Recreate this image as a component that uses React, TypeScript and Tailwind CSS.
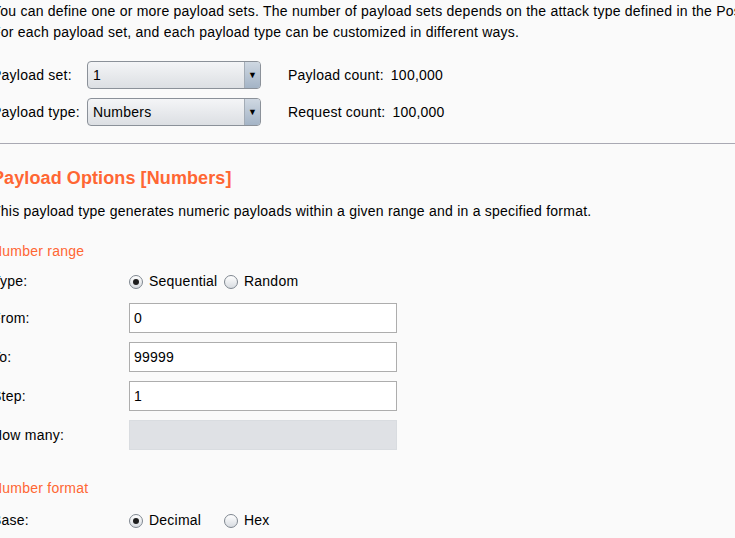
const Combo = ({ value }: { value: string }) => (
  <div className="flex h-[28px] w-[174px] items-stretch overflow-hidden rounded-[4px] border border-[#8b9199] bg-gradient-to-b from-[#f4f5f7] to-[#dcdfe3]">
    <div className="flex flex-1 items-center pl-[5px]">{value}</div>
    <div className="flex w-[16px] items-center justify-center border-l border-[#a3acb6] bg-gradient-to-b from-[#cfd8e2] to-[#a4b4c6]">
      <span className="text-[9px] leading-none text-black">▼</span>
    </div>
  </div>
);

const Radio = ({ label, checked }: { label: string; checked?: boolean }) => (
  <label className="flex min-w-[95px] items-center gap-[6px]">
    <span className="flex h-[14px] w-[14px] items-center justify-center rounded-full border border-[#7f8790] bg-gradient-to-b from-[#ffffff] to-[#d8dce1]">
      {checked && <span className="h-[6px] w-[6px] rounded-full bg-[#1e1e1e]" />}
    </span>
    <span>{label}</span>
  </label>
);

const Field = ({ label, value, disabled }: { label: string; value?: string; disabled?: boolean }) => (
  <div className="flex items-center">
    <div className="w-[137px]">{label}</div>
    <div
      className={
        disabled
          ? "h-[30px] w-[268px] border border-[#d9dce0] bg-[#dfe1e5]"
          : "flex h-[30px] w-[268px] items-center border border-[#adadad] bg-white pl-[4px]"
      }
    >
      {value}
    </div>
  </div>
);

export default function App() {
  return (
    <div className="h-[538px] w-[735px] overflow-hidden bg-[#fafafa] pt-[1px] font-['Liberation_Sans',Arial,sans-serif] text-[14px] tracking-[0.23px] text-black">
      <div className="-ml-2 whitespace-nowrap">
        {/* intro */}
        <p className="leading-[21px]">
          You can define one or more payload sets. The number of payload sets depends on the attack type defined in the Positions tab. Various payload types are available
          <br />
          For each payload set, and each payload type can be customized in different ways.
        </p>

        <div className="mt-[18px] flex flex-col gap-[9px]">
          <div className="flex items-center">
            <div className="w-[95px]">Payload set:</div>
            <Combo value="1" />
            <div className="ml-[27px] flex gap-[7px]">
              <span>Payload count:</span>
              <span>100,000</span>
            </div>
          </div>
          <div className="flex items-center">
            <div className="w-[95px]">Payload type:</div>
            <Combo value="Numbers" />
            <div className="ml-[27px] flex gap-[7px]">
              <span>Request count:</span>
              <span>100,000</span>
            </div>
          </div>
        </div>
      </div>

      <div className="mt-[17px] border-t border-[#a9a9b3]" />

      <div className="-ml-2 whitespace-nowrap">
        <h2 className="mt-[24px] text-[18px] font-bold leading-[21px] tracking-[0.1px] text-[#ff6633]">Payload Options [Numbers]</h2>
        <p className="mt-[12px] leading-[21px]">
          This payload type generates numeric payloads within a given range and in a specified format.
        </p>

        {/* number range */}
        <div className="mt-[19px] leading-[21px] text-[#ff6633]">Number range</div>
        <div className="mt-[9px] flex h-[21px] items-center">
          <div className="w-[137px]">Type:</div>
          <Radio label="Sequential" checked />
          <Radio label="Random" />
        </div>
        <div className="mt-[11px] flex flex-col gap-[9px]">
          <Field label="From:" value="0" />
          <Field label="To:" value="99999" />
          <Field label="Step:" value="1" />
          <Field label="How many:" disabled />
        </div>

        {/* number format */}
        <div className="mt-[28px] leading-[21px] text-[#ff6633]">Number format</div>
        <div className="mt-[11px] flex h-[21px] items-center">
          <div className="w-[137px]">Base:</div>
          <Radio label="Decimal" checked />
          <Radio label="Hex" />
        </div>
      </div>
    </div>
  );
}
